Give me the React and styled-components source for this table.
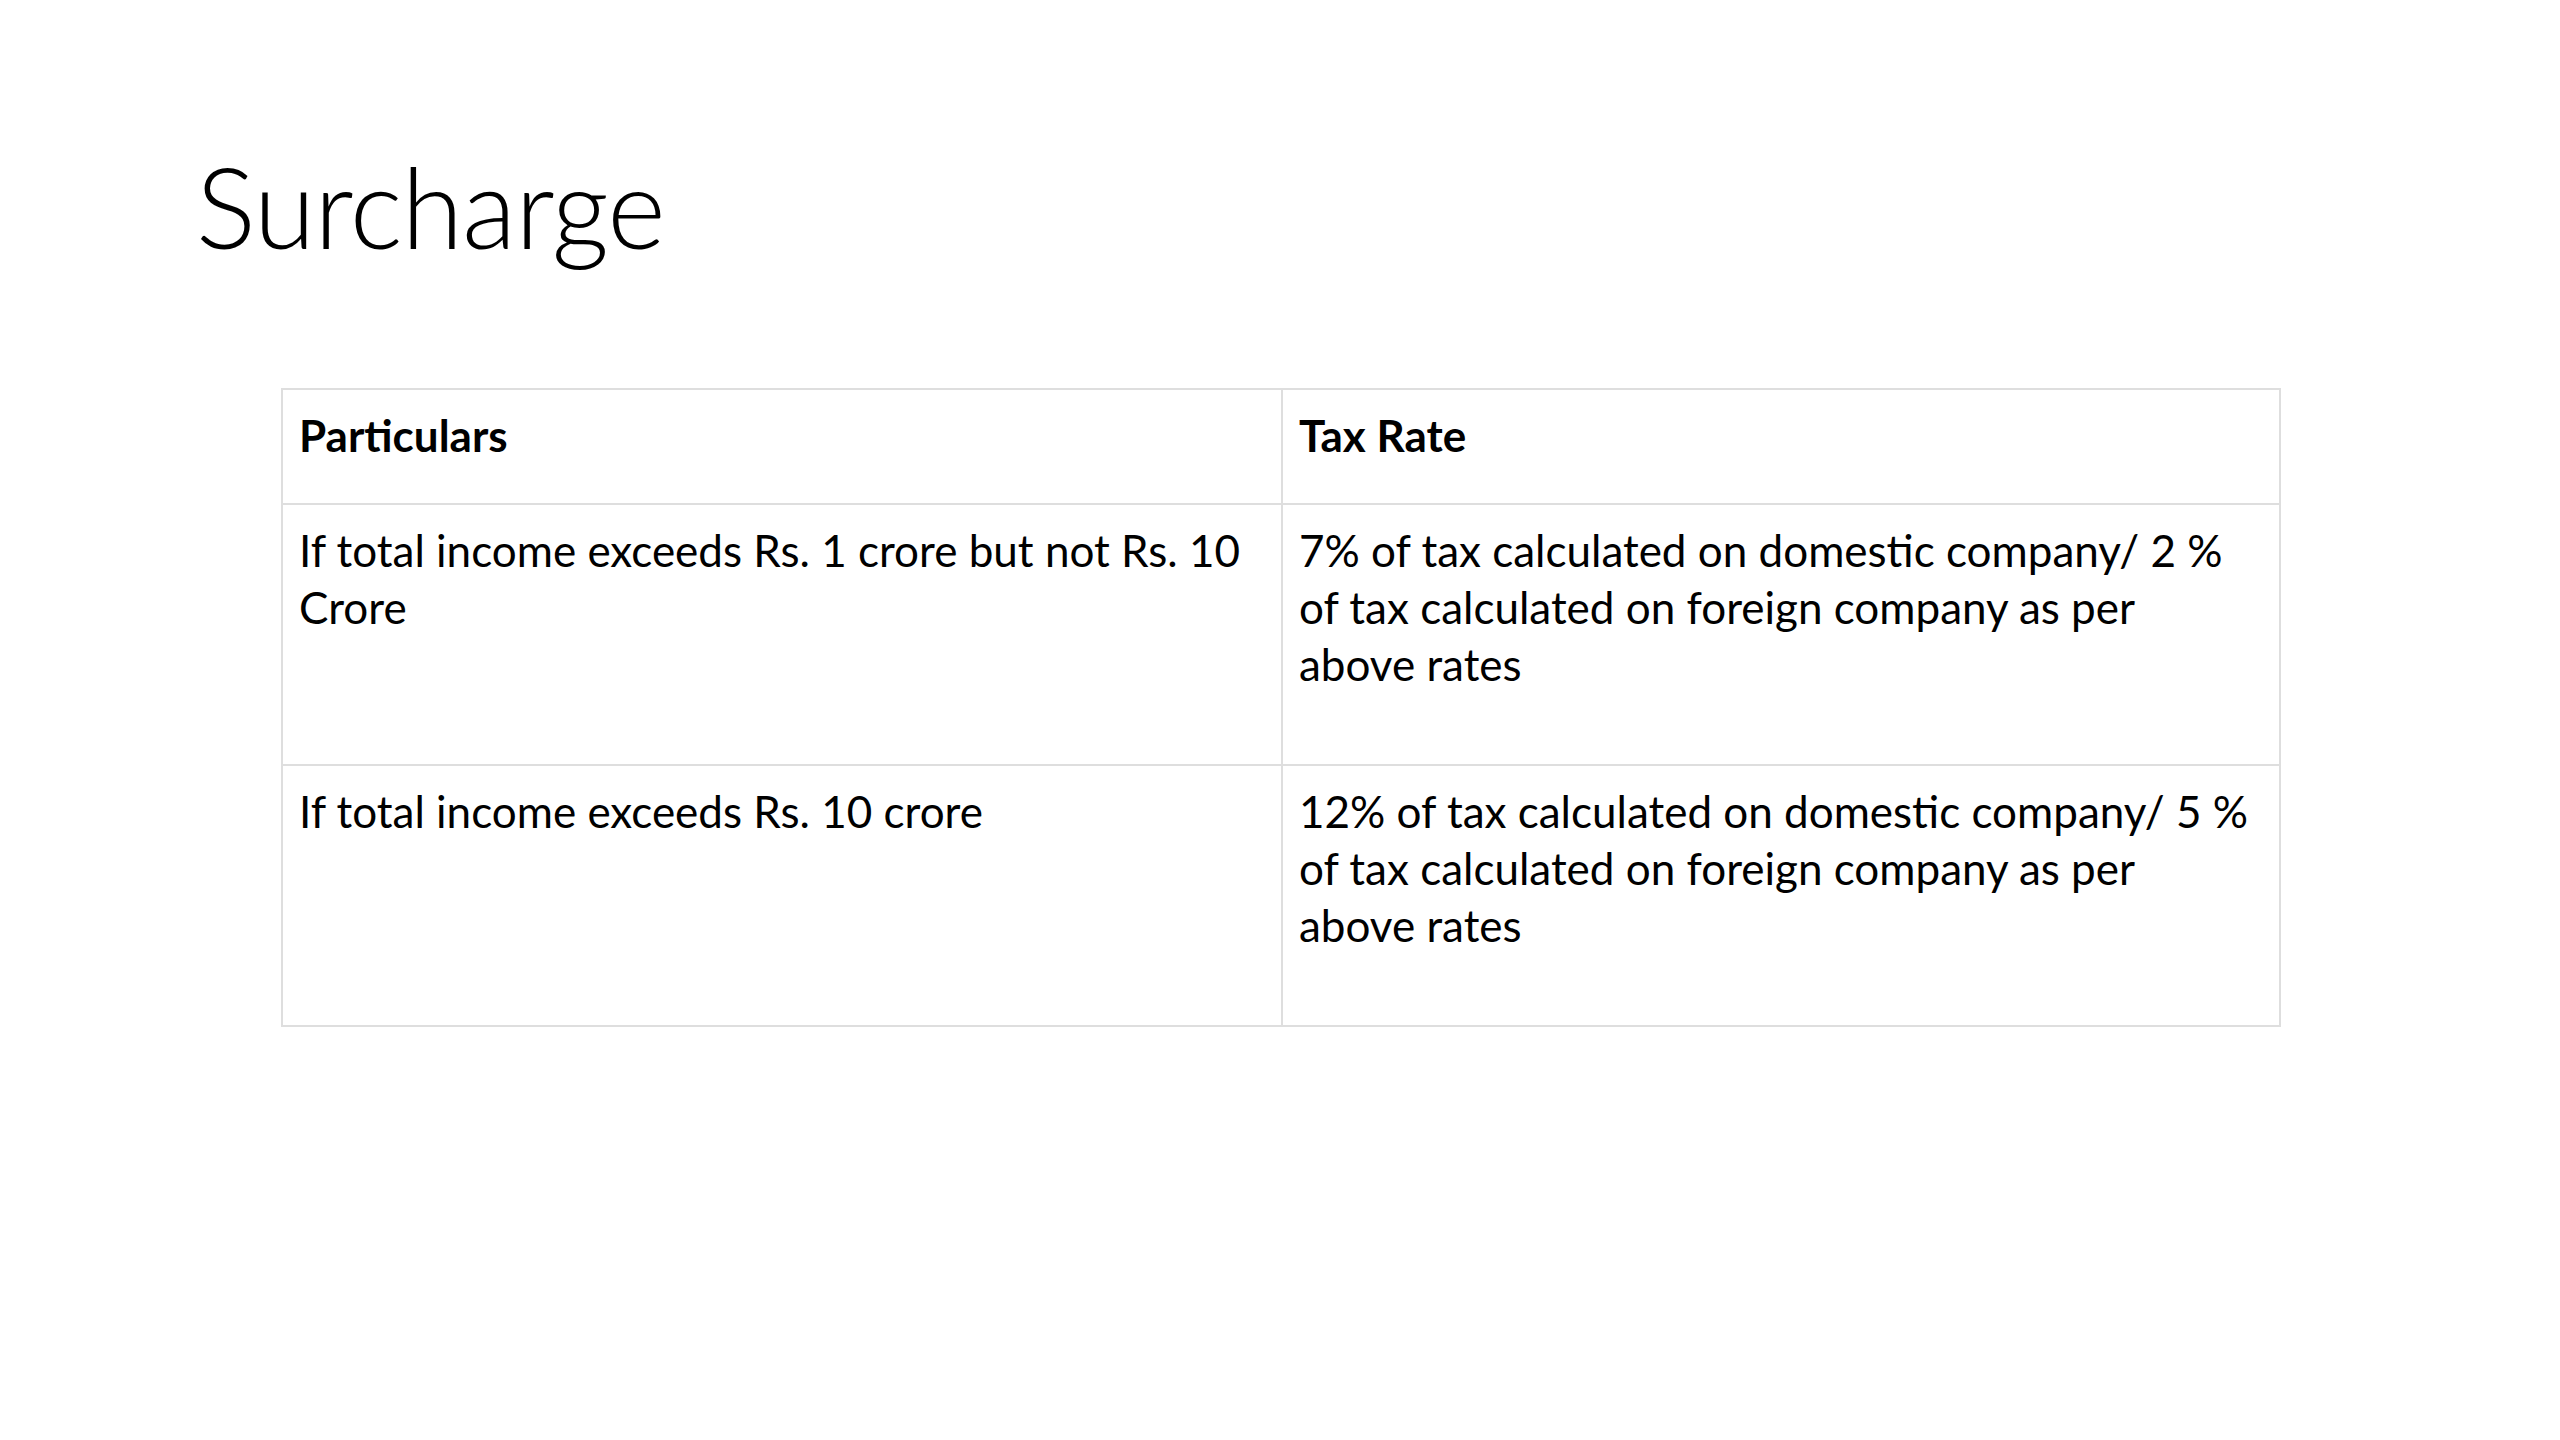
import styled, { createGlobalStyle } from 'styled-components';

const rows = [
  {
    particulars: 'If total income exceeds Rs. 1 crore but not Rs. 10 Crore',
    rate: '7% of tax calculated on domestic company/ 2 % of tax calculated on foreign company as per above rates',
  },
  {
    particulars: 'If total income exceeds Rs. 10 crore',
    rate: '12% of tax calculated on domestic company/ 5 % of tax calculated on foreign company as per above rates',
  },
];

const App = () => (
  <Slide>
    <GlobalStyle />
    <Title>Surcharge</Title>
    <Table>
      <Row $height={113}>
        <Cell $head>Particulars</Cell>
        <Cell $head>Tax Rate</Cell>
      </Row>
      {rows.map((row) => (
        <Row key={row.particulars} $height={259}>
          <Cell>{row.particulars}</Cell>
          <Cell>{row.rate}</Cell>
        </Row>
      ))}
    </Table>
  </Slide>
);

//#region Styles
const GlobalStyle = createGlobalStyle`
  html, body {
    margin: 0;
    padding: 0;
    background: #ffffff;
  }
`;

const Slide = styled.div`
  width: 2560px;
  height: 1440px;
  display: flex;
  flex-direction: column;
  background: #ffffff;
  color: #000000;
  font-family: Lato, 'Open Sans', sans-serif;
`;

const Title = styled.h1`
  margin: 150px 0 0 196px;
  font-size: 112px;
  font-weight: 300;
  line-height: 1;
  letter-spacing: -1px;
`;

const Table = styled.div`
  margin: 126px 0 0 281px;
  width: 1996px;
  display: flex;
  flex-direction: column;
  border: 2px solid #dedede;
`;

const Row = styled.div`
  display: grid;
  grid-template-columns: 1fr 1fr;
  height: ${({ $height }) => $height}px;

  & + & {
    border-top: 2px solid #dedede;
  }
`;

const Cell = styled.div`
  padding: 17px 28px 18px 16px;
  font-size: 44px;
  line-height: 57px;
  font-weight: ${({ $head }) => ($head ? 700 : 400)};

  & + & {
    border-left: 2px solid #dedede;
  }
`;
//#endregion Styles

export default App;
